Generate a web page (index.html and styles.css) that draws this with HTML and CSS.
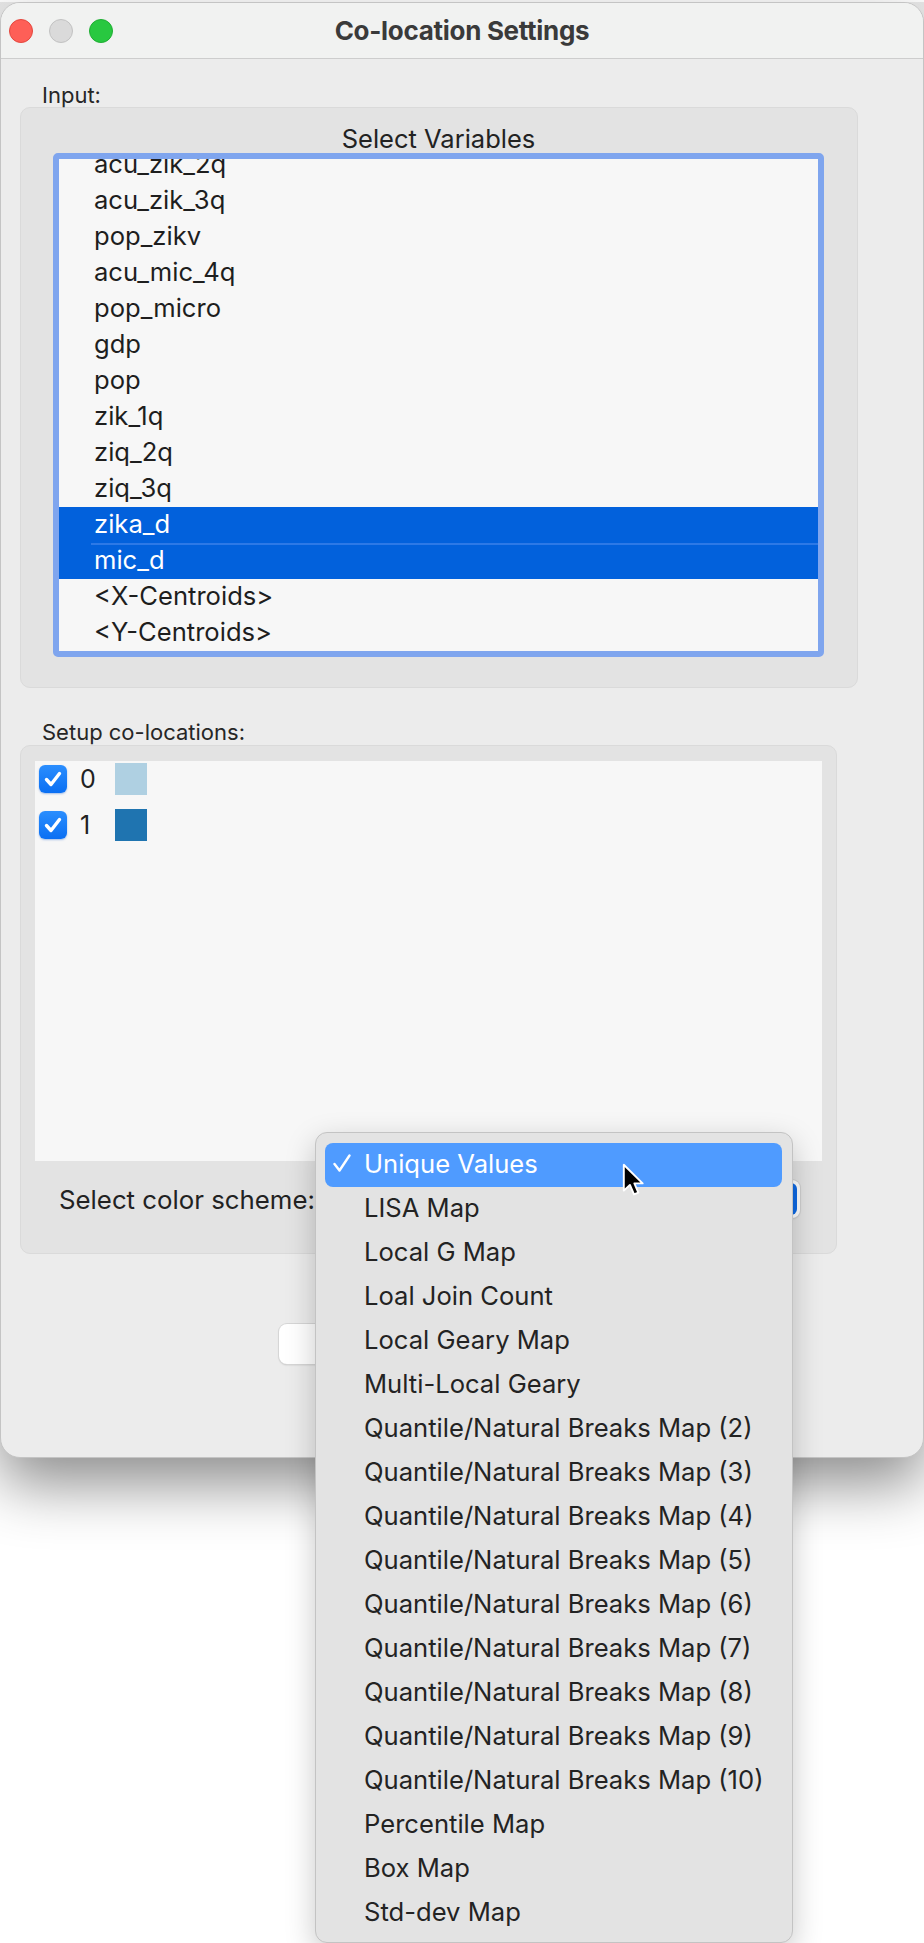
FILE: index.html
```html
<!DOCTYPE html>
<html>
<head>
<meta charset="utf-8">
<title>Co-location Settings</title>
<link rel="stylesheet" href="styles.css">
</head>
<body>
<div class="page">
  <div class="window">
    <div class="titlebar">
      <div class="lights">
        <span class="light light-red"></span>
        <span class="light light-gray"></span>
        <span class="light light-green"></span>
      </div>
      <div class="title">Co-location Settings</div>
      <div></div>
    </div>
    <div class="content">
      <div class="label">Input:</div>
      <div class="group group-input">
        <div class="group-heading">Select Variables</div>
        <div class="listbox">
          <ul class="var-list">
            <li>acu_zik_2q</li>
            <li>acu_zik_3q</li>
            <li>pop_zikv</li>
            <li>acu_mic_4q</li>
            <li>pop_micro</li>
            <li>gdp</li>
            <li>pop</li>
            <li>zik_1q</li>
            <li>ziq_2q</li>
            <li>ziq_3q</li>
            <li class="sel">zika_d</li>
            <li class="sel sel-next">mic_d</li>
            <li>&lt;X-Centroids&gt;</li>
            <li>&lt;Y-Centroids&gt;</li>
          </ul>
        </div>
      </div>
      <div class="label label-setup">Setup co-locations:</div>
      <div class="group group-setup">
        <div class="coloc-list">
          <div class="coloc-row">
            <span class="checkbox"><svg viewBox="0 0 28 28" width="28" height="28"><path d="M7.5 14.5 L12 19.5 L20.5 8.5" fill="none" stroke="#fff" stroke-width="3.4" stroke-linecap="round" stroke-linejoin="round"/></svg></span>
            <span class="coloc-val">0</span>
            <span class="swatch swatch-light"></span>
          </div>
          <div class="coloc-row">
            <span class="checkbox"><svg viewBox="0 0 28 28" width="28" height="28"><path d="M7.5 14.5 L12 19.5 L20.5 8.5" fill="none" stroke="#fff" stroke-width="3.4" stroke-linecap="round" stroke-linejoin="round"/></svg></span>
            <span class="coloc-val">1</span>
            <span class="swatch swatch-dark"></span>
          </div>
        </div>
        <div class="scheme-row">
          <span class="scheme-label">Select color scheme:</span>
          <div class="popup" aria-label="Unique Values">
            <span class="popup-arrow"></span>
          </div>
        </div>
      </div>
      <div class="buttons">
        <button class="btn" aria-label="Close"></button>
        <button class="btn" aria-label="OK"></button>
      </div>
    </div>
  </div>

  <div class="menu">
    <div class="menu-item menu-item-active"><span class="menu-check"><svg viewBox="0 0 18 18" width="18" height="18"><path d="M1.5 10 L6.5 16.5 L16.5 1.5" fill="none" stroke="#fff" stroke-width="2.4" stroke-linecap="round" stroke-linejoin="round"/></svg></span>Unique Values</div>
    <div class="menu-item"><span class="menu-check"></span>LISA Map</div>
    <div class="menu-item"><span class="menu-check"></span>Local G Map</div>
    <div class="menu-item"><span class="menu-check"></span>Loal Join Count</div>
    <div class="menu-item"><span class="menu-check"></span>Local Geary Map</div>
    <div class="menu-item"><span class="menu-check"></span>Multi-Local Geary</div>
    <div class="menu-item"><span class="menu-check"></span>Quantile/Natural Breaks Map (2)</div>
    <div class="menu-item"><span class="menu-check"></span>Quantile/Natural Breaks Map (3)</div>
    <div class="menu-item"><span class="menu-check"></span>Quantile/Natural Breaks Map (4)</div>
    <div class="menu-item"><span class="menu-check"></span>Quantile/Natural Breaks Map (5)</div>
    <div class="menu-item"><span class="menu-check"></span>Quantile/Natural Breaks Map (6)</div>
    <div class="menu-item"><span class="menu-check"></span>Quantile/Natural Breaks Map (7)</div>
    <div class="menu-item"><span class="menu-check"></span>Quantile/Natural Breaks Map (8)</div>
    <div class="menu-item"><span class="menu-check"></span>Quantile/Natural Breaks Map (9)</div>
    <div class="menu-item"><span class="menu-check"></span>Quantile/Natural Breaks Map (10)</div>
    <div class="menu-item"><span class="menu-check"></span>Percentile Map</div>
    <div class="menu-item"><span class="menu-check"></span>Box Map</div>
    <div class="menu-item"><span class="menu-check"></span>Std-dev Map</div>
  </div>

  <svg class="cursor" viewBox="0 0 20 30" width="24" height="36">
    <path d="M1.5 1.5 L1.5 23 L6.6 18.3 L10 26.2 L13.6 24.7 L10.3 17 L17.2 17 Z" fill="#000" stroke="#fff" stroke-width="1.6" stroke-linejoin="round"/>
  </svg>
</div>
</body>
</html>
```

FILE: styles.css
```css
* {
  box-sizing: border-box;
}

html, body {
  margin: 0;
  padding: 0;
  background: #ffffff;
}

body {
  font-family: Inter, "Liberation Sans", Arial, sans-serif;
  color: #1f1f1f;
  width: 924px;
  height: 1943px;
  overflow: hidden;
}

.page {
  position: relative;
  width: 924px;
  height: 1943px;
  background: linear-gradient(#e9e9e9, #ffffff 60px);
}

.window {
  margin-top: 2px;
  width: 924px;
  background: #ececec;
  border: 1px solid #c4c4c4;
  border-radius: 20px;
  box-shadow: 0 26px 60px rgba(0, 0, 0, 0.45);
}

.titlebar {
  height: 56px;
  display: grid;
  grid-template-columns: 1fr auto 1fr;
  align-items: center;
  background: #f1f2f1;
  border-bottom: 1px solid #cdcdcd;
  border-radius: 19px 19px 0 0;
}

.lights {
  display: flex;
  gap: 16px;
  padding-left: 8px;
}

.light {
  width: 24px;
  height: 24px;
  border-radius: 50%;
}

.light-red {
  background: #fe5f57;
  border: 1px solid #e4473e;
}

.light-gray {
  background: #dadada;
  border: 1px solid #c2c2c2;
}

.light-green {
  background: #28c840;
  border: 1px solid #1fae33;
}

.title {
  font-size: 26px;
  font-weight: 700;
  color: #3a3a3a;
  letter-spacing: -0.3px;
}

.content {
  padding: 24px 0 93px 0;
}

.label {
  margin-left: 41px;
  height: 24px;
  line-height: 24px;
  font-size: 22px;
  color: #262626;
}

.group {
  margin-left: 19px;
  background: #e3e3e3;
  border: 1px solid #dadada;
  border-radius: 10px;
}

.group-input {
  width: 838px;
  padding: 17px 33px 30px 32px;
}

.group-heading {
  height: 28px;
  line-height: 28px;
  text-align: center;
  font-size: 25.5px;
  color: #222;
}

.listbox {
  height: 504px;
  border: 6px solid #7fa5ee;
  border-radius: 5px;
  background: #f7f7f7;
  overflow: hidden;
}

.var-list {
  list-style: none;
  margin: -12px 0 0 0;
  padding: 0;
}

.var-list li {
  height: 36px;
  line-height: 34px;
  padding-left: 35px;
  font-size: 25.6px;
  color: #1e1e1e;
}

.var-list li.sel {
  background: #0261dc;
  color: #ffffff;
}

.var-list li.sel-next {
  background: linear-gradient(#2d79e6, #2d79e6) no-repeat 32px 0 / calc(100% - 32px) 2px, #0261dc;
}

.label-setup {
  margin-top: 32px;
}

.group-setup {
  margin-top: 1px;
  width: 817px;
  padding: 15px 14px 35px 14px;
}

.coloc-list {
  height: 400px;
  background: #f7f7f7;
  padding: 2px 0 0 4px;
  display: flex;
  flex-direction: column;
  gap: 14px;
}

.coloc-row {
  height: 32px;
  display: flex;
  align-items: center;
}

.checkbox {
  width: 28px;
  height: 28px;
  border-radius: 6px;
  background: linear-gradient(#2b8efe, #0a6ff3);
  box-shadow: 0 1px 2px rgba(0, 80, 200, 0.35);
  margin-right: 13px;
  display: flex;
}

.coloc-val {
  width: 35px;
  font-size: 25px;
  color: #222;
}

.swatch {
  width: 32px;
  height: 32px;
}

.swatch-light {
  background: #afd0e2;
}

.swatch-dark {
  background: #1f74b0;
}

.scheme-row {
  margin: 19px 22px 0 24px;
  height: 38px;
  display: flex;
  align-items: center;
  gap: 10px;
}

.scheme-label {
  font-size: 25.8px;
  color: #222;
  white-space: nowrap;
}

.popup {
  flex: 1;
  height: 38px;
  display: flex;
  align-items: center;
  justify-content: flex-end;
  background: #ffffff;
  border-radius: 8px;
  box-shadow: 0 0 0 1px #d0d0d0, 0 1px 2px rgba(0, 0, 0, 0.15);
  overflow: hidden;
}

.popup-arrow {
  width: 32px;
  height: 32px;
  margin-right: 3px;
  border-radius: 6px;
  background: #0f6be6;
}

.buttons {
  margin-top: 70px;
  display: flex;
  justify-content: center;
  gap: 20px;
}

.btn {
  width: 173px;
  height: 40px;
  border: none;
  border-radius: 8px;
  background: #ffffff;
  box-shadow: 0 0 0 1px #d6d6d6, 0 1px 2px rgba(0, 0, 0, 0.2);
}

.menu {
  position: absolute;
  left: 315px;
  top: 1130px;
  width: 478px;
  height: 811px;
  padding: 10px 10px 8px 9px;
  background: #e3e3e3;
  border: 1px solid #c3c3c3;
  border-radius: 12px;
  box-shadow: 0 10px 30px rgba(0, 0, 0, 0.22);
}

.menu-item {
  height: 44px;
  display: flex;
  align-items: center;
  padding-left: 8px;
  padding-bottom: 4px;
  font-size: 25.6px;
  color: #232323;
  border-radius: 8px;
  white-space: nowrap;
}

.menu-item-active {
  background: #4f9bff;
  color: #ffffff;
}

.menu-check {
  width: 31px;
  height: 18px;
  display: flex;
  align-items: center;
}

.cursor {
  position: absolute;
  left: 622px;
  top: 1161px;
}
```
